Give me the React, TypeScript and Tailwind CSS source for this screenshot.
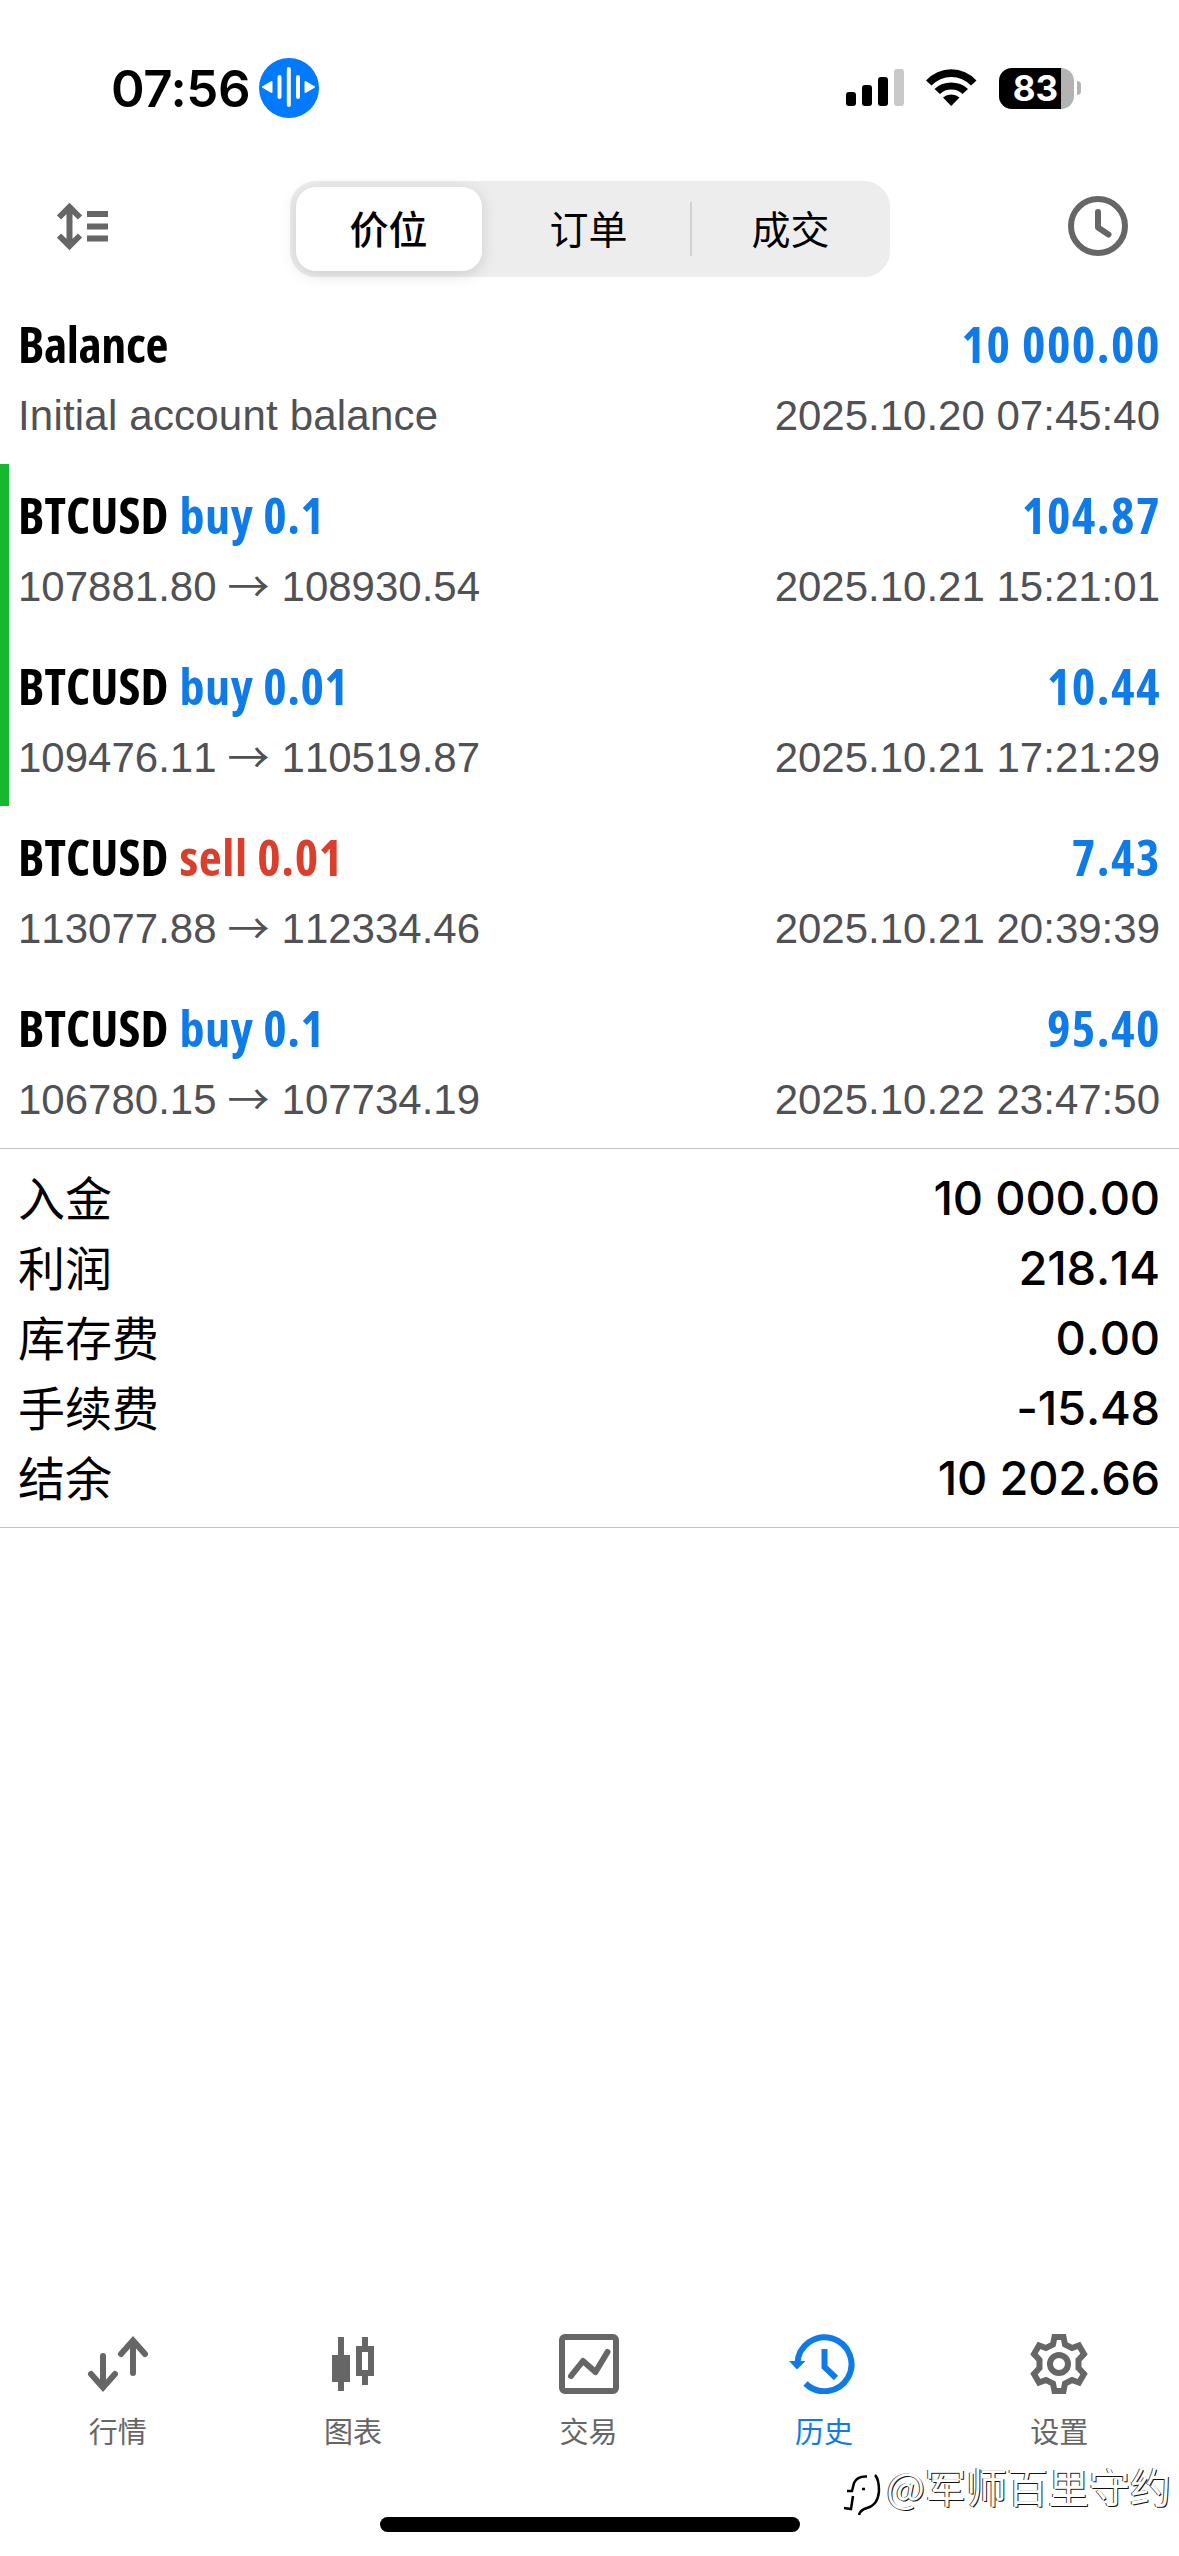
import type { ReactNode } from 'react';

type Deal = {
  id: number;
  symbol: string;
  side?: 'buy' | 'sell';
  volume?: string;
  profit: string;
  open?: string;
  close?: string;
  comment?: string;
  time: string;
  marked?: boolean;
};

const deals: Deal[] = [
  { id: 1, symbol: 'Balance', profit: '10 000.00', comment: 'Initial account balance', time: '2025.10.20 07:45:40' },
  { id: 2, symbol: 'BTCUSD', side: 'buy', volume: '0.1', profit: '104.87', open: '107881.80', close: '108930.54', time: '2025.10.21 15:21:01', marked: true },
  { id: 3, symbol: 'BTCUSD', side: 'buy', volume: '0.01', profit: '10.44', open: '109476.11', close: '110519.87', time: '2025.10.21 17:21:29', marked: true },
  { id: 4, symbol: 'BTCUSD', side: 'sell', volume: '0.01', profit: '7.43', open: '113077.88', close: '112334.46', time: '2025.10.21 20:39:39' },
  { id: 5, symbol: 'BTCUSD', side: 'buy', volume: '0.1', profit: '95.40', open: '106780.15', close: '107734.19', time: '2025.10.22 23:47:50' },
];

const summary = [
  { label: '入金', value: '10 000.00' },
  { label: '利润', value: '218.14' },
  { label: '库存费', value: '0.00' },
  { label: '手续费', value: '-15.48' },
  { label: '结余', value: '10 202.66' },
];

const sideColors = {
  buy: 'text-[#0f7be8]',
  sell: 'text-[#da3f2e]',
};

function StatusBar() {
  return (
    <div className="flex h-[176px] items-center pl-[111px] pr-[98px]">
      <span className="w-[148px] font-['Inter',sans-serif] text-[51px] leading-none font-semibold tracking-[-0.4px]">
        07:56
      </span>
      <svg className="size-[60px]" viewBox="0 0 60 60">
        <circle cx="30" cy="30" r="30" fill="#007aff" />
        <g stroke="#fff" strokeWidth="4" strokeLinecap="round">
          <path d="M20.5 19V39M29.8 11V47M39 19V39" />
        </g>
        <g fill="#fff" stroke="#fff" strokeWidth="2" strokeLinejoin="round">
          <path d="M4 29L12.500 24V34ZM55 29L46.500 24V34Z" />
        </g>
      </svg>
      <div className="ml-auto flex items-center">
        <svg className="h-[38px] w-[58px]" viewBox="0 0 58 38">
          <rect x="0" y="23" width="10" height="14" rx="3" />
          <rect x="16" y="16" width="10" height="21" rx="3" />
          <rect x="32" y="8" width="10" height="29" rx="3" />
          <rect x="48" y="0" width="10" height="37" rx="3" fill="#c9c9c9" />
        </svg>
        <svg className="ml-[22px] h-[38px] w-[51px]" viewBox="0 0 51 38">
          <path d="M0 11.500A34 34 0 0 1 50.500 11.500L45 16.500A27 27 0 0 0 5.500 16.500Z" />
          <path d="M8.500 20A24.500 24.500 0 0 1 42 20L36.500 25A16.500 16.500 0 0 0 14 25Z" />
          <path d="M17 28.500A12.500 12.500 0 0 1 33.500 28.500L25.200 37Z" />
        </svg>
        <div className="ml-[22px] flex h-[41px] w-[75px] items-center overflow-hidden rounded-[13px] bg-[#b3b3b3]">
          <div className="flex h-full w-[62px] items-center justify-end bg-black pr-[3px] font-['Inter',sans-serif] text-[35px] leading-none font-bold text-white">
            83
          </div>
        </div>
        <div className="ml-[3px] h-[14px] w-[4px] rounded-r-full bg-[#b3b3b3]" />
      </div>
    </div>
  );
}

function Header() {
  return (
    <div className="flex h-[117px] items-start justify-between pl-[57px] pr-[51px]">
      <svg className="mt-[26px] h-[49px] w-[52px]" viewBox="0 0 52 49" fill="none" stroke="#666" strokeWidth="6">
        <path d="M12.500 5V44M2 15.500L12.500 5L23 15.500M2 33.500L12.500 44L23 33.500M30 12H51M30 24.500H51M30 36.500H51" />
      </svg>
      <div className="ml-[2px] mt-[5px] flex h-[96px] w-[600px] items-center rounded-[26px] bg-[#ededee] p-[6px] font-['Noto_Sans_CJK_SC',sans-serif] text-[39px] leading-[36px]">
        <div className="flex h-[84px] w-[186px] items-center justify-center rounded-[20px] bg-white pb-[4px] font-medium shadow-[0_3px_16px_rgba(0,0,0,0.14)]">
          价位
        </div>
        <div className="flex h-full flex-1 items-center justify-center pb-[4px] pl-[6px]">订单</div>
        <div className="h-[54px] w-[2px] bg-[#d2d2d4]" />
        <div className="flex h-full w-[192px] items-center justify-center pb-[4px] pl-[6px]">成交</div>
      </div>
      <svg className="mt-[20px] size-[60px]" viewBox="0 0 60 60" fill="none" stroke="#666" strokeWidth="6">
        <circle cx="30" cy="30" r="27" />
        <path d="M30 16V31.500L40.500 38.500" strokeLinecap="round" strokeLinejoin="round" />
      </svg>
    </div>
  );
}

function DealRow({ deal }: { deal: Deal }) {
  return (
    <div
      className={`h-[171px] border-l-[9px] pt-[16px] pr-[19px] pl-[9px] ${
        deal.marked ? 'border-[#15b82f]' : 'border-transparent'
      }`}
    >
      <div className="flex justify-between font-['Open_Sans',sans-serif] text-[50px] leading-[70px] font-bold font-stretch-condensed">
        <div className="flex gap-[11px]">
          <span className={deal.side ? 'tracking-[0.1px]' : 'tracking-[-0.4px]'}>{deal.symbol}</span>
          {deal.side && (
            <span className={`tracking-[0.6px] ${sideColors[deal.side]}`}>
              {deal.side} {deal.volume}
            </span>
          )}
        </div>
        <span className="-mr-[1px] tracking-[1.5px] text-[#0f7be8]">{deal.profit}</span>
      </div>
      <div className="flex h-[72px] items-center justify-between pt-[2px] font-['Liberation_Sans',sans-serif] text-[42px] leading-[48px] text-[#505154] [font-kerning:none]">
        {deal.comment ? (
          <span className="tracking-[0.2px]">{deal.comment}</span>
        ) : (
          <div className="flex gap-[11px]">
            <span>{deal.open}</span>
            <span className="-mt-[3px] w-[43px] font-['Noto_Sans_CJK_SC',sans-serif]">→</span>
            <span>{deal.close}</span>
          </div>
        )}
        <span>{deal.time}</span>
      </div>
    </div>
  );
}

function TabItem({ label, active, children }: { label: string; active?: boolean; children: ReactNode }) {
  return (
    <div className={`flex flex-1 flex-col items-center ${active ? 'text-[#0f7be8]' : 'text-[#666]'}`}>
      <svg className="h-[60px] w-[72px]" viewBox="-6 0 72 60" fill="none" stroke="currentColor" strokeWidth="6">
        {children}
      </svg>
      <span className="mt-[18px] font-['Noto_Sans_CJK_SC',sans-serif] text-[29px] leading-[36px]">{label}</span>
    </div>
  );
}

function TabBar() {
  return (
    <div className="flex h-[183px] pr-[2px]">
      <TabItem label="行情">
        <path d="M15 22V53M45 39V8" strokeLinecap="round" />
        <path d="M3 40L15 53.500L27 40M33 20L45 6.500L57 20" strokeLinecap="round" />
      </TabItem>
      <TabItem label="图表">
        <path d="M18 3V57M42 3V12M42 42V51" />
        <path d="M9 21H27V48H9Z" fill="currentColor" stroke="none" />
        <path d="M36 15H48V39H36Z" />
      </TabItem>
      <TabItem label="交易">
        <rect x="3" y="3" width="54" height="54" rx="3" />
        <path d="M12 42L24 27L36.500 38L48.500 18" strokeLinecap="round" strokeLinejoin="round" />
      </TabItem>
      <TabItem label="历史" active>
        <path d="M3.500 29A27 27 0 1 1 11.500 49.500M30.500 15V33L42 44" />
        <path d="M-5 27H11.500L3 35.500Z" fill="currentColor" stroke="none" />
      </TabItem>
      <TabItem label="设置">
        <path d="M25.500 3H34.500L36 10.500L43 14L50 11.500L55 20L49.500 26V34L55 40L50 48.500L43 46L36 49.500L34.500 57H25.500L24 49.500L17 46L10 48.500L5 40L10.500 34V26L5 20L10 11.500L17 14L24 10.500Z" />
        <circle cx="30" cy="30" r="9" />
      </TabItem>
    </div>
  );
}

export default function App() {
  return (
    <div className="relative flex h-[2556px] w-[1179px] flex-col overflow-hidden bg-white text-black">
      <StatusBar />
      <Header />

      {deals.map((deal) => (
        <DealRow key={deal.id} deal={deal} />
      ))}

      <div className="border-y border-[#c4c4c6] pt-[14px] pr-[19px] pb-[14px] pl-[18px]">
        {summary.map((row) => (
          <div key={row.label} className="flex h-[70px] items-start justify-between text-[47px]">
            <span className="font-['Noto_Sans_CJK_SC',sans-serif] leading-[66px]">{row.label}</span>
            <span className="font-['Inter',sans-serif] leading-[70px] font-medium tracking-[-0.2px] [font-kerning:none]">
              {row.value}
            </span>
          </div>
        ))}
      </div>

      <div className="flex-1" />
      <TabBar />
      <div className="flex h-[39px] justify-center">
        <div className="h-[15px] w-[420px] rounded-full bg-black" />
      </div>

      {/* Watermark */}
      <div className="absolute top-[2459px] right-[8px] flex items-start">
        <svg className="h-[60px] w-[51px]" viewBox="0 0 51 60" fill="none" stroke="#000" strokeWidth="2.500">
          <path d="M12 32H17L19 24Q22 17 32 17.500M18 37L16 50L9 49M40 16Q44 20 44 32Q43 46 32 49Q25 51 24 56M27 30H30" />
        </svg>
        <span className="mt-[2px] font-['Noto_Sans_CJK_SC',sans-serif] text-[41px] leading-[48px] text-white [text-shadow:-1px_0_0_#444,1px_1px_0_#111]">
          @军师百里守约
        </span>
      </div>
    </div>
  );
}
